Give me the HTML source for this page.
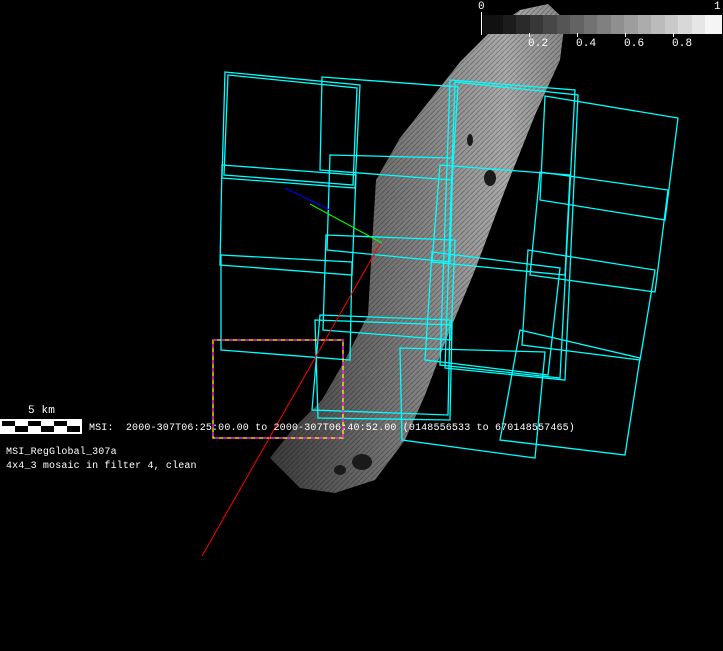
<!DOCTYPE html>
<html><head><meta charset="utf-8"><style>
html,body{margin:0;padding:0;background:#000;width:723px;height:651px;overflow:hidden}
.t{position:absolute;color:#fff;font:10px "Liberation Mono",monospace;white-space:pre;line-height:13px;letter-spacing:0.15px}
</style></head><body>
<svg width="723" height="651" style="position:absolute;left:0;top:0">
<defs>
<linearGradient id="g" x1="0" y1="0" x2="1" y2="0">
<stop offset="0" stop-color="#3a3a3a"/><stop offset="0.45" stop-color="#7a7a7a"/><stop offset="0.8" stop-color="#aaa"/><stop offset="1" stop-color="#888"/>
</linearGradient>
<pattern id="p" width="5" height="5" patternUnits="userSpaceOnUse"><path d="M0 5L5 0" stroke="#000" stroke-opacity=".25" stroke-width="1"/></pattern>
</defs>
<polygon fill="url(#g)" points="520,10 548,4 565,20 560,60 535,115 505,190 475,270 448,335 425,395 405,440 375,480 335,493 300,488 270,458 292,430 322,400 345,360 368,315 372,245 376,180 400,138 430,100 460,62 490,32"/>
<polygon fill="url(#p)" points="520,10 548,4 565,20 560,60 535,115 505,190 475,270 448,335 425,395 405,440 375,480 335,493 300,488 270,458 292,430 322,400 345,360 368,315 372,245 376,180 400,138 430,100 460,62 490,32"/>
<g fill="#1a1a1a"><ellipse cx="490" cy="178" rx="6" ry="8"/><ellipse cx="470" cy="140" rx="3" ry="6"/><ellipse cx="362" cy="462" rx="10" ry="8"/><ellipse cx="340" cy="470" rx="6" ry="5"/></g>
<g fill="none" stroke="#00ffff" stroke-width="1.3">
<polygon points="225,72 360,85 355,188 222,178"/>
<polygon points="228,75 357,88 353,185 224,175"/>
<polygon points="322,77 458,87 452,180 320,170"/>
<polygon points="222,165 356,175 352,275 220,265"/>
<polygon points="221,255 352,262 350,360 221,350"/>
<polygon points="330,155 453,158 450,262 327,250"/>
<polygon points="326,235 455,240 451,340 323,330"/>
<polygon points="320,315 450,320 448,415 312,410"/>
<polygon points="315,320 452,325 450,420 318,418"/>
<polygon points="450,80 575,90 560,378 440,365"/>
<polygon points="455,82 578,95 565,380 445,368"/>
<polygon points="545,96 678,118 665,220 540,200"/>
<polygon points="540,172 668,190 655,292 530,275"/>
<polygon points="528,250 655,270 640,360 522,345"/>
<polygon points="520,330 640,358 625,455 500,440"/>
<polygon points="400,348 545,352 535,458 402,440"/>
<polygon points="440,165 570,175 565,275 432,262"/>
<polygon points="432,252 560,268 548,375 425,360"/>
</g>
<rect x="213" y="340" width="130" height="98" fill="none" stroke="#ffff00" stroke-width="1.3"/>
<rect x="213" y="340" width="130" height="98" fill="none" stroke="#ff00ff" stroke-width="1.3" stroke-dasharray="4 4"/>
<line x1="380" y1="244" x2="202" y2="556" stroke="#ff0000" stroke-width="1"/>
<line x1="285" y1="188" x2="330" y2="210" stroke="#0000ff" stroke-width="1"/>
<line x1="310" y1="204" x2="382" y2="243" stroke="#00ff00" stroke-width="1"/>
<g>
<rect x="483" y="15" width="20" height="19" fill="#111"/><rect x="503" y="15" width="13" height="19" fill="#1c1c1c"/>
<rect x="516" y="15" width="14" height="19" fill="#2a2a2a"/><rect x="530" y="15" width="13" height="19" fill="#383838"/>
<rect x="543" y="15" width="14" height="19" fill="#474747"/><rect x="557" y="15" width="13" height="19" fill="#555"/>
<rect x="570" y="15" width="14" height="19" fill="#636363"/><rect x="584" y="15" width="13" height="19" fill="#727272"/>
<rect x="597" y="15" width="14" height="19" fill="#808080"/><rect x="611" y="15" width="13" height="19" fill="#8f8f8f"/>
<rect x="624" y="15" width="14" height="19" fill="#9d9d9d"/><rect x="638" y="15" width="13" height="19" fill="#acacac"/>
<rect x="651" y="15" width="14" height="19" fill="#bbb"/><rect x="665" y="15" width="13" height="19" fill="#c9c9c9"/>
<rect x="678" y="15" width="14" height="19" fill="#d8d8d8"/><rect x="692" y="15" width="13" height="19" fill="#e6e6e6"/>
<rect x="705" y="15" width="17" height="19" fill="#f5f5f5"/>
<g stroke="#fff"><line x1="481.5" y1="12" x2="481.5" y2="35"/><line x1="529.5" y1="33" x2="529.5" y2="37"/><line x1="577.5" y1="33" x2="577.5" y2="37"/><line x1="625.5" y1="33" x2="625.5" y2="37"/><line x1="673.5" y1="33" x2="673.5" y2="37"/></g>
</g>
<rect x="0" y="419" width="82" height="15" fill="#fff"/>
<g fill="#000"><rect x="2" y="421" width="13" height="5"/><rect x="28" y="421" width="13" height="5"/><rect x="54" y="421" width="13" height="5"/>
<rect x="15" y="426" width="13" height="6"/><rect x="41" y="426" width="13" height="6"/><rect x="67" y="426" width="13" height="6"/></g>
</svg>
<div class="t" style="left:478px;top:1px;font-size:11px">0</div>
<div class="t" style="left:714px;top:1px;font-size:11px">1</div>
<div class="t" style="left:528px;top:38px;font-size:11px">0.2</div>
<div class="t" style="left:576px;top:38px;font-size:11px">0.4</div>
<div class="t" style="left:624px;top:38px;font-size:11px">0.6</div>
<div class="t" style="left:672px;top:38px;font-size:11px">0.8</div>
<div class="t" style="left:28px;top:405px;font-size:11px">5 km</div>
<div class="t" style="left:89px;top:422px">MSI:  2000-307T06:25:00.00 to 2000-307T06:40:52.00 (0148556533 to 670148557465)</div>
<div class="t" style="left:6px;top:446px">MSI_RegGlobal_307a</div>
<div class="t" style="left:6px;top:460px">4x4_3 mosaic in filter 4, clean</div>
</body></html>
